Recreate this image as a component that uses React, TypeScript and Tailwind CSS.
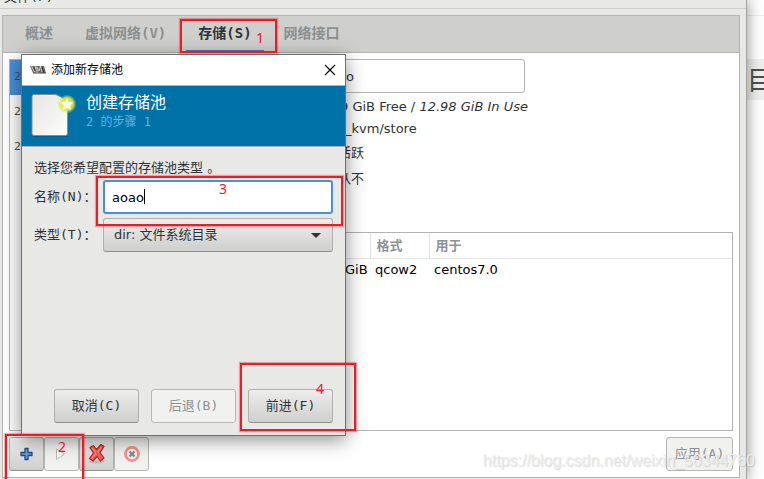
import { useState } from "react";
import type { ReactNode } from "react";

const TABS = [
  { id: "overview", label: "概述" },
  { id: "network", label: "虚拟网络(V)" },
  { id: "storage", label: "存储(S)" },
  { id: "interfaces", label: "网络接口" },
];

const POOLS = ["2", "2", "2"];

const RAISED = "border border-[#b0b0ae] border-b-[#8f8f8d] bg-linear-to-b from-[#ededeb] to-[#cfcfcd] text-[#2e3436]";
const FLAT = "border border-[#b6b6b3] bg-[#f1f1f0] text-[#8d9091]";
const MONO = "[font-family:'DejaVu_Sans_Mono','Noto_Sans_CJK_SC',monospace]";
const MARK = "absolute border-2 border-[#ed1c24] shadow-[0_0_1px_1px_rgba(237,28,36,0.35)]";

function DialogButton({ children, disabled, onClick }: { children: ReactNode; disabled?: boolean; onClick?: () => void }) {
  return (
    <button
      type="button"
      disabled={disabled}
      onClick={onClick}
      className={`h-[34px] w-[85px] rounded-[3px] text-[13px] ${MONO} ${disabled ? FLAT : RAISED}`}
    >
      {children}
    </button>
  );
}

function ToolButton({ label, disabled, children }: { label: string; disabled?: boolean; children: ReactNode }) {
  return (
    <button
      type="button"
      aria-label={label}
      disabled={disabled}
      className={`flex h-[34px] w-[35px] items-center justify-center rounded-[3px] ${disabled ? FLAT : RAISED}`}
    >
      {children}
    </button>
  );
}

function AppIcon() {
  return (
    <svg width="16" height="10" viewBox="0 0 16 10" aria-hidden="true">
      <path d="M0 1h14l2 7H3z" fill="#6d6868" />
      <path d="M1.500 1l3 6 1.500-6M7 8l0-6 2 4 1.500-5 1.500 6" fill="none" stroke="#d9d4d4" strokeWidth="0.900" />
      <path d="M12 2l2 6M4 3l1 3" stroke="#2f2b2b" strokeWidth="1" />
      <path d="M3 8.500h13" stroke="#a39d9d" strokeWidth="1" />
    </svg>
  );
}

function NewPageIcon() {
  return (
    <svg width="48" height="48" viewBox="0 0 48 48" aria-hidden="true">
      <defs>
        <linearGradient id="paper" x1="0" y1="0" x2="1" y2="1">
          <stop offset="0" stopColor="#e6e6e4" />
          <stop offset="0.6" stopColor="#f3f3f2" />
          <stop offset="1" stopColor="#ffffff" />
        </linearGradient>
        <radialGradient id="glow">
          <stop offset="0" stopColor="#f6f640" />
          <stop offset="0.65" stopColor="#e4ec2c" stopOpacity="0.9" />
          <stop offset="1" stopColor="#c8e040" stopOpacity="0" />
        </radialGradient>
      </defs>
      <path d="M4 45h35" stroke="#003f60" strokeOpacity="0.5" strokeWidth="1.500" />
      <path d="M5 3.500H26C31 4 38.500 11 38.500 16V42.500a2 2 0 0 1-2 2H5a2 2 0 0 1-2-2V5.500a2 2 0 0 1 2-2z" fill="url(#paper)" stroke="#8b8b86" />
      <path d="M25 4c4 1 5 5 4 9 4-1 8-1 9 3" fill="#fdfdfd" stroke="#dcdcd7" strokeWidth="0.8" />
      <circle cx="38" cy="13" r="9.500" fill="url(#glow)" />
      <path d="M38 7l2 3.900 4.300.600-3.100 3 .700 4.300-3.900-2-3.900 2 .700-4.300-3.100-3 4.300-.600z" fill="#fffff4" />
    </svg>
  );
}

function PlusIcon() {
  return (
    <svg width="14" height="14" viewBox="0 0 14 14" aria-hidden="true">
      <path d="M5 1.500h3v4h4v3H8v4H5v-4H1v-3h4z" fill="#729fcf" stroke="#204a87" strokeWidth="1.300" strokeLinejoin="round" />
    </svg>
  );
}

function PlayIcon() {
  return (
    <svg width="14" height="14" viewBox="0 0 14 14" aria-hidden="true">
      <path d="M1.500 2v10.500L9.500 7z" fill="#f7f7f6" stroke="#bcbdb9" strokeLinejoin="round" />
    </svg>
  );
}

function DeleteIcon() {
  return (
    <svg width="20" height="22" viewBox="0 0 20 22" aria-hidden="true">
      <ellipse cx="10" cy="18.500" rx="8" ry="2" fill="#000" fillOpacity="0.12" />
      <path
        d="M3 4.500L6.500 2.500 9.500 6.500 14 1.500 17 3.500 13 9.500 17 15 13.500 18 10 13.500 6 18 2.500 15.500 6.500 10z"
        fill="#f25f5f"
        stroke="#b92222"
        strokeWidth="1.200"
        strokeLinejoin="round"
      />
      <path d="M5 5l4 5-4.500 5.500M14.500 4L11 9" fill="none" stroke="#ff9c9c" strokeWidth="1" />
    </svg>
  );
}

function StopIcon() {
  return (
    <svg width="16" height="16" viewBox="0 0 16 16" aria-hidden="true">
      <circle cx="8" cy="8" r="6.600" fill="#f3ecea" stroke="#ee8f8c" strokeWidth="2.600" />
      <path d="M5.500 5.500l5 5M10.500 5.500l-5 5" stroke="#85898a" strokeWidth="2.200" />
    </svg>
  );
}

function AddPoolDialog() {
  const [name, setName] = useState("aoao");

  return (
    <div
      role="dialog"
      aria-labelledby="dialog-title"
      className="absolute left-[21px] top-[54px] flex min-h-[382px] w-[325px] flex-col border border-[#6e6f6e] bg-[#e8e8e6] shadow-[0_4px_18px_rgba(0,0,0,0.45)]"
    >
      <div className="flex h-[30px] items-center bg-white pl-2 pr-[7px]">
        <AppIcon />
        <h1 id="dialog-title" className="ml-[5px] flex-1 text-[12px] leading-5 text-black">添加新存储池</h1>
        <button type="button" aria-label="关闭" className="p-0.5">
          <svg width="12" height="12" viewBox="0 0 12 12" aria-hidden="true">
            <path d="M1 1l10 10M11 1L1 11" stroke="#000" strokeWidth="1.100" />
          </svg>
        </button>
      </div>

      <div className="flex h-[62px] border-y border-[#b0b2b0] bg-[#0072a8] pl-[7px] pt-[5px]">
        <NewPageIcon />
        <div className="ml-[9px] pt-0.5">
          <h2 className="text-[16px] leading-5 text-white">创建存储池</h2>
          <p className={`text-[12px] leading-[18px] text-[#5eb3e4] ${MONO}`}>2 的步骤 1</p>
        </div>
      </div>

      <div className="flex flex-1 flex-col px-3 pb-3 pt-[11px] text-[13px] text-[#2e3436]">
        <p className="leading-5">选择您希望配置的存储池类型 。</p>
        <div className="mt-0.5 grid grid-cols-[69px_1fr] items-center gap-y-1">
          <label htmlFor="pool-name" className={`whitespace-nowrap ${MONO}`}>名称(N)：</label>
          <div className="relative">
            <input
              id="pool-name"
              value={name}
              onChange={(e) => setName(e.target.value)}
              className="block h-[34px] w-full rounded-[3px] border-2 border-[#4a90d9] bg-white px-[7px] text-black caret-transparent outline-none"
            />
            {/* text cursor */}
            <span className="absolute left-[41px] top-[9px] h-[15px] w-px bg-black" />
          </div>
          <label htmlFor="pool-type" className={`whitespace-nowrap ${MONO}`}>类型(T)：</label>
          <div className="relative">
            <select id="pool-type" className={`block h-[34px] w-full appearance-none rounded-[3px] px-2.5 outline-none ${RAISED}`}>
              <option>dir: 文件系统目录</option>
            </select>
            <svg width="10" height="5" viewBox="0 0 10 5" aria-hidden="true" className="pointer-events-none absolute right-3 top-[15px]">
              <path d="M0 0h10L5 5z" fill="#2e3436" />
            </svg>
          </div>
        </div>

        <div className="mt-auto flex justify-end gap-3">
          <DialogButton>取消(C)</DialogButton>
          <DialogButton disabled>后退(B)</DialogButton>
          <DialogButton>前进(F)</DialogButton>
        </div>
      </div>
    </div>
  );
}

// Red marker boxes with their step numbers
function StepMarks() {
  return (
    <div className="pointer-events-none absolute inset-0 overflow-hidden text-[14px] leading-4 text-[#f5142d] [font-family:'Noto_Sans',sans-serif]">
      <div className={`left-[180px] top-[19px] h-[34px] w-[97px] ${MARK}`} />
      <span className="absolute left-[256px] top-[30px]">1</span>
      <div className={`left-[5px] top-[434px] h-[60px] w-[79px] ${MARK}`} />
      <span className="absolute left-[58px] top-[439px]">2</span>
      <div className={`left-[96px] top-[176px] h-[50px] w-[247px] ${MARK}`} />
      <span className="absolute left-[219px] top-[181px]">3</span>
      <div className={`left-[240px] top-[363px] h-[68px] w-[116px] ${MARK}`} />
      <span className="absolute left-[316px] top-[381px]">4</span>
    </div>
  );
}

export default function App() {
  const [tab, setTab] = useState("storage");

  return (
    <div className="relative flex min-h-screen overflow-hidden bg-white text-[13px] [font-family:'DejaVu_Sans','Noto_Sans_CJK_SC',sans-serif]">
      <div className="relative z-10 flex min-w-0 flex-1 flex-col border-r border-[#a3a3a2] bg-[#e8e8e6] pb-px shadow-[0_0_14px_rgba(0,0,0,0.45)]">
        <div className="flex h-[9px] items-end overflow-hidden border-b border-[#cfcfcc] pl-1">
          <span className={`shrink-0 pb-[3px] leading-4 text-[#2e3436] ${MONO}`}>文件(F)</span>
        </div>

        <div className="ml-0.5 mr-[6px] mt-[6px] flex flex-1 flex-col border border-[#b3b3b1] bg-white">
          <div role="tablist" className="flex h-[37px] gap-2 border-b border-[#b3b3b1] bg-[#cfcfcd] pl-2.5">
            {TABS.map((t) => (
              <button
                key={t.id}
                type="button"
                role="tab"
                aria-selected={tab === t.id}
                onClick={() => setTab(t.id)}
                className={`border-b-2 px-3 text-[14px] font-bold ${MONO} ${
                  tab === t.id ? "border-[#5a6cb8] text-[#2e3436]" : "border-transparent text-[#8c8f8f]"
                }`}
              >
                {t.label}
              </button>
            ))}
          </div>

          <div className="flex flex-1 flex-col gap-1.5 p-1.5">
            <div className="flex flex-1 gap-2">
              <ul className="w-[321px] shrink-0 border border-[#b3b3b1] bg-white text-[11px] text-[#4b4f50]">
                {POOLS.map((p, i) => (
                  <li key={i} className={`flex h-[35px] items-center pl-1 ${i === 0 ? "bg-[#4a90d9]" : ""}`}>
                    {p}
                  </li>
                ))}
              </ul>

              <div className="flex min-w-0 flex-1 flex-col text-[#2e3436]">
                <input
                  aria-label="名称"
                  defaultValue="o"
                  className="h-[34px] w-[187px] rounded-[3px] border border-[#b3b3b1] bg-white px-[7px] outline-none"
                />
                <p className="mt-1 pl-0.5 leading-5">
                  9 GiB Free / <em>12.98 GiB In Use</em>
                </p>
                <p className="mt-0.5 pl-[7px] leading-5">_kvm/store</p>
                <p className="mt-1 leading-5">活跃</p>
                <p className="mt-1.5 leading-5">从不</p>

                <div className="mt-[43px] flex-1 border border-[#b3b3b1]">
                  <table className="w-full table-fixed border-collapse text-left">
                    <colgroup>
                      <col className="w-[31px]" />
                      <col className="w-[59px]" />
                      <col />
                    </colgroup>
                    <thead>
                      <tr className="h-[25px] border-b border-[#e3e3e2] text-[#8f9293]">
                        <th className="border-r border-[#e3e3e2]" />
                        <th className="border-r border-[#e3e3e2] pl-1.5">格式</th>
                        <th className="pl-1.5">用于</th>
                      </tr>
                    </thead>
                    <tbody className="text-black">
                      <tr className="h-[22px]">
                        <td className="pl-1.5">GiB</td>
                        <td className="pl-[5px]">qcow2</td>
                        <td className="pl-[5px]">centos7.0</td>
                      </tr>
                    </tbody>
                  </table>
                </div>
              </div>
            </div>

            <div className="flex items-center">
              <ToolButton label="添加"><PlusIcon /></ToolButton>
              <ToolButton label="启动" disabled><PlayIcon /></ToolButton>
              <ToolButton label="删除"><DeleteIcon /></ToolButton>
              <ToolButton label="停止" disabled><StopIcon /></ToolButton>
              <button type="button" disabled className={`ml-auto h-[34px] w-[67px] rounded-[3px] ${MONO} ${FLAT}`}>
                应用(A)
              </button>
            </div>
          </div>
        </div>
      </div>

      {/* page behind the window */}
      <div className="w-[17px] shrink-0 overflow-hidden">
        <div className="h-4 border-b border-[#efefef]" />
        <div className="mt-[43px] flex h-[41px] items-center bg-[#efefef] pt-1 text-[26px] text-[#4f4f4f]">目</div>
      </div>

      <div className="absolute inset-0 z-20">
        <AddPoolDialog />
        <StepMarks />
        <p className="pointer-events-none absolute bottom-2 right-[9px] text-[16px] leading-5 text-[#ececec] [text-shadow:1px_1px_1px_rgba(0,0,0,0.14)] [font-family:'Liberation_Sans',sans-serif]">
          https://blog.csdn.net/weixin_50344760
        </p>
      </div>
    </div>
  );
}
